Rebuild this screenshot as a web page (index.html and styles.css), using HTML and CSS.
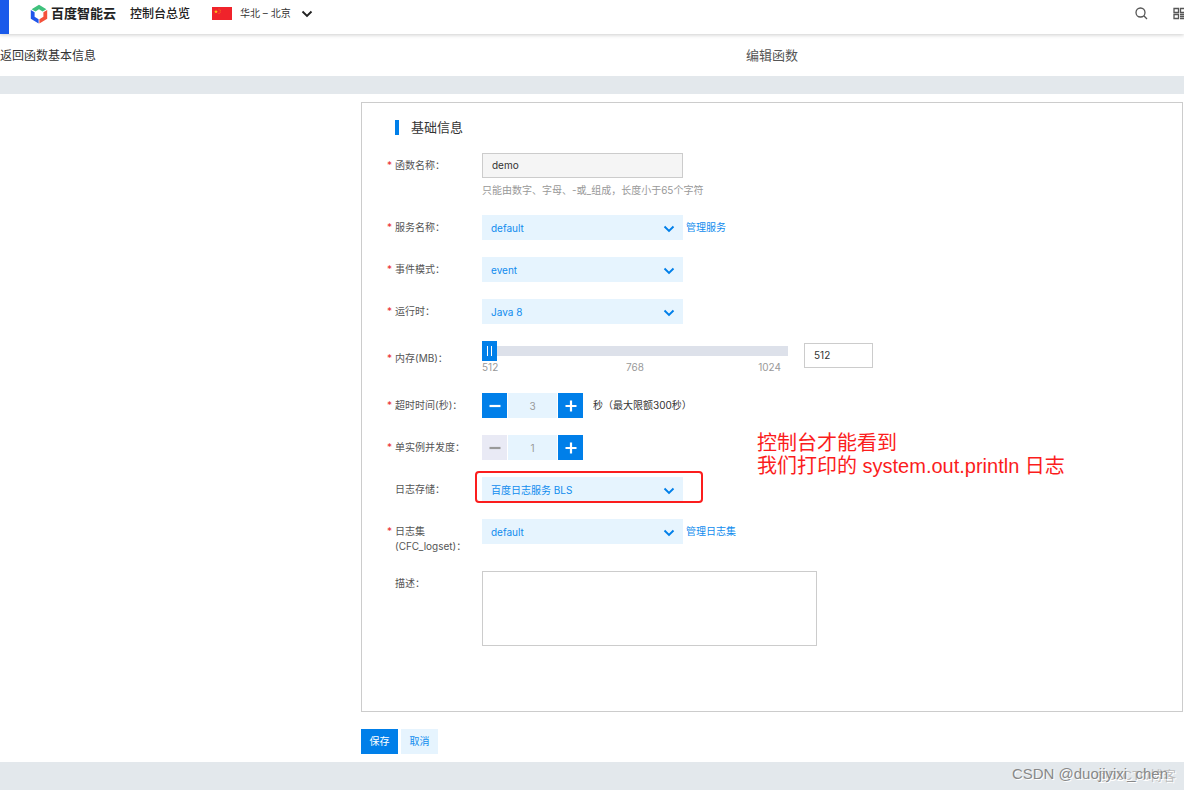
FILE: index.html
```html
<!DOCTYPE html>
<html lang="zh-CN">
<head>
<meta charset="utf-8">
<title>编辑函数</title>
<link rel="stylesheet" href="styles.css">
</head>
<body>
<svg class="defs" aria-hidden="true">
  <symbol id="chevron" viewBox="0 0 12 8"><path d="M1.5 1.5 6 6l4.5-4.5" fill="none" stroke="currentColor" stroke-width="1.9"/></symbol>
  <symbol id="plus" viewBox="0 0 12 12"><path d="M6 .5v11M.5 6h11" stroke="currentColor" stroke-width="2.2"/></symbol>
  <symbol id="minus" viewBox="0 0 12 12"><path d="M.5 6h11" stroke="currentColor" stroke-width="2.2"/></symbol>
</svg>

<header class="topbar">
  <button class="menu" type="button" aria-label="菜单"></button>
  <a class="brand" href="#">
    <svg class="brand-mark" viewBox="0 0 18 20" aria-hidden="true">
      <path d="M1.600 5.200 9 .8l7.400 4.400-3.800 2.400L9 5.300 5.400 7.600z" fill="#3fc17c"/>
      <path d="M.8 6 4.600 8.300v4.500L8.600 15.200v4.200L.8 14.800z" fill="#1f55ea"/>
      <path d="M17.200 6 13.400 8.300v4.500L9.400 15.200v4.200l7.800-4.600z" fill="#f4523b"/>
    </svg>
    <span class="brand-name">百度智能云</span>
  </a>
  <a class="overview" href="#">控制台总览</a>
  <button class="region" type="button">
    <svg class="flag" viewBox="0 0 20 13" aria-hidden="true">
      <path d="M0 0h20v13H0z" fill="#f0232b"/>
      <path d="m4 2.500.5 1.400H6L4.800 4.800l.5 1.500L4 5.400l-1.300.9.5-1.500L2 3.900h1.500z" fill="#ffc61a"/>
      <g fill="#f58a1f"><circle cx="7" cy="2" r=".5"/><circle cx="8.200" cy="3.200" r=".5"/><circle cx="8.200" cy="5" r=".5"/><circle cx="7" cy="6.200" r=".5"/></g>
    </svg>
    <span>华北 – 北京</span>
    <svg class="chevron" aria-hidden="true"><use href="#chevron"/></svg>
  </button>
  <div class="tools">
    <button class="tool" type="button" aria-label="搜索">
      <svg viewBox="0 0 13 13" fill="none" stroke="#555" stroke-width="1.300"><circle cx="5.500" cy="5.500" r="4.500"/><path d="m8.800 8.800 3.200 3.200"/></svg>
    </button>
    <button class="tool apps" type="button" aria-label="应用">
      <svg viewBox="0 0 13 13" fill="none" stroke="#555" stroke-width="1.300"><path d="M1 1.500h4.500v4H1zM7.500 1.500H12v4H7.500zM1 7.500h4.500v4H1zM7 7.500h6M7 9.500h6M7 11.500h6"/></svg>
    </button>
  </div>
</header>

<div class="titlebar">
  <a class="back" href="#">返回函数基本信息</a>
  <h1 class="page-title">编辑函数</h1>
</div>

<main class="page">
  <form class="content">
    <section class="panel">
      <h2 class="section-title">基础信息</h2>

      <div class="row">
        <label class="label required" for="name">函数名称：</label>
        <div class="stack">
          <input class="text-box name-box" id="name" type="text" value="demo" readonly>
          <p class="hint">只能由数字、字母、-或_组成，长度小于65个字符</p>
        </div>
      </div>

      <div class="row">
        <label class="label required" for="service">服务名称：</label>
        <div class="field">
          <span class="picker"><select id="service"><option>default</option></select><svg class="chevron"><use href="#chevron"/></svg></span>
          <a class="link" href="#">管理服务</a>
        </div>
      </div>

      <div class="row">
        <label class="label required" for="event">事件模式：</label>
        <div class="field">
          <span class="picker"><select id="event"><option>event</option></select><svg class="chevron"><use href="#chevron"/></svg></span>
        </div>
      </div>

      <div class="row">
        <label class="label required" for="runtime">运行时：</label>
        <div class="field">
          <span class="picker"><select id="runtime"><option>Java 8</option></select><svg class="chevron"><use href="#chevron"/></svg></span>
        </div>
      </div>

      <div class="row row-middle">
        <label class="label required" for="memory">内存(MB)：</label>
        <div class="memory">
          <div class="slider">
            <input id="memory" type="range" min="512" max="1024" value="512">
            <div class="ticks"><span>512</span><span>768</span><span>1024</span></div>
          </div>
          <input class="text-box memory-box" type="text" value="512" aria-label="内存数值">
        </div>
      </div>

      <div class="row">
        <label class="label required" for="timeout">超时时间(秒)：</label>
        <div class="field">
          <div class="stepper">
            <button type="button" aria-label="减少"><svg><use href="#minus"/></svg></button>
            <input id="timeout" type="text" value="3">
            <button type="button" aria-label="增加"><svg><use href="#plus"/></svg></button>
          </div>
          <span class="unit">秒（最大限额300秒）</span>
        </div>
      </div>

      <div class="row">
        <label class="label required" for="concurrency">单实例并发度：</label>
        <div class="field">
          <div class="stepper">
            <button type="button" aria-label="减少" disabled><svg><use href="#minus"/></svg></button>
            <input id="concurrency" type="text" value="1">
            <button type="button" aria-label="增加"><svg><use href="#plus"/></svg></button>
          </div>
        </div>
      </div>

      <div class="row">
        <label class="label" for="storage">日志存储：</label>
        <div class="field marked">
          <span class="picker"><select id="storage"><option>百度日志服务 BLS</option></select><svg class="chevron"><use href="#chevron"/></svg></span>
          <p class="note">控制台才能看到<br>我们打印的 system.out.println 日志</p>
        </div>
      </div>

      <div class="row">
        <label class="label required" for="logset">日志集<br>(CFC_logset)：</label>
        <div class="field">
          <span class="picker"><select id="logset"><option>default</option></select><svg class="chevron"><use href="#chevron"/></svg></span>
          <a class="link" href="#">管理日志集</a>
        </div>
      </div>

      <div class="row">
        <label class="label" for="desc">描述：</label>
        <textarea class="text-box desc-box" id="desc"></textarea>
      </div>
    </section>

    <div class="actions">
      <button class="btn primary" type="button">保存</button>
      <button class="btn" type="button">取消</button>
    </div>
  </form>
</main>
<div class="watermark second">@51CTO博客</div>
<div class="watermark">CSDN @duojiyixi_chen</div>
</body>
</html>
```
FILE: styles.css
```css
*, *::before, *::after { box-sizing: border-box; }

body {
  margin: 0;
  min-height: 100vh;
  display: flex;
  flex-direction: column;
  position: relative;
  overflow-x: hidden;
  background: #e3e8ec;
  color: #333;
  font: 10px/15px Inter, "Noto Sans CJK SC", sans-serif;
}

button, input, select, textarea { font: inherit; color: inherit; border: 0; border-radius: 0; margin: 0; padding: 0; }
button { background: none; }
a { color: inherit; text-decoration: none; }
h1, h2, p { margin: 0; font-weight: 400; }
svg { display: block; }
.defs { display: none; }

.topbar {
  position: relative;
  z-index: 1;
  display: flex;
  align-items: center;
  height: 34px;
  padding-bottom: 7px;
  background: #fff;
  box-shadow: 0 1px 4px rgba(0, 0, 0, .2);
}
.menu { width: 9px; height: 34px; margin-bottom: -7px; background: #1a5aea; }
.brand { display: flex; align-items: center; gap: 3px; margin-left: 21px; }
.brand-mark { width: 18px; height: 20px; }
.brand-name { color: #222; font-size: 13px; font-weight: 700; }
.overview { margin-left: 14px; color: #222; font-size: 12px; font-weight: 500; }
.region { display: flex; align-items: center; gap: 8px; margin-left: 22px; }
.flag { width: 20px; height: 13px; }
.region .chevron { margin-left: 2px; color: #222; }
.chevron { width: 12px; height: 8px; }
.tools { display: flex; gap: 25px; margin-left: auto; margin-right: -2px; }
.tool svg { width: 13px; height: 13px; }

.titlebar {
  display: grid;
  grid-template-columns: 361px 1fr;
  align-items: center;
  height: 42px;
  padding-right: 1px;
  background: #fff;
}
.back { font-size: 12px; }
.page-title { font-size: 13px; color: #555; text-align: center; }

.page { margin-top: 18px; padding: 8px 1px 8px 361px; background: #fff; }
.panel { padding: 15px 33px 65px; border: 1px solid #ccc; display: flex; flex-direction: column; gap: 17px; }
.section-title {
  display: flex;
  align-items: center;
  gap: 12px;
  height: 18px;
  font-size: 13px;
}
.section-title::before { content: ""; width: 4px; height: 15px; background: #007fe9; }

.row { display: grid; grid-template-columns: 87px 1fr; align-items: start; }
.row-middle { align-items: center; }
.label { position: relative; padding-top: 5px; color: #555; white-space: nowrap; }
.row-middle .label { padding-bottom: 5px; }
.required::before { content: "*"; position: absolute; left: -8px; color: #ea2e2e; }
.field { display: flex; align-items: center; gap: 3px; height: 25px; }
.link { color: #108cee; }

.text-box { height: 25px; padding: 0 9px 2px; border: 1px solid #ccc; background: #fff; }
.name-box { width: 201px; background: #f5f5f5; }
.stack { display: flex; flex-direction: column; gap: 5px; align-items: flex-start; }
.hint { color: #999; }

.picker { position: relative; width: 201px; }
.picker select {
  display: block;
  width: 100%;
  height: 25px;
  padding: 2px 9px 0;
  appearance: none;
  background: #e6f4fe;
  color: #108cee;
}
.picker .chevron { position: absolute; right: 8px; top: 10px; color: #007fe9; pointer-events: none; }

.memory { display: flex; align-items: flex-start; gap: 16px; }
.slider { width: 306px; }
.slider input {
  display: block;
  width: 100%;
  height: 20px;
  appearance: none;
  background: linear-gradient(#dde1ea, #dde1ea) center / 100% 10px no-repeat;
}
.slider input::-webkit-slider-thumb {
  appearance: none;
  width: 15px;
  height: 20px;
  background:
    linear-gradient(#fff, #fff) 5px 5px / 1px 10px no-repeat,
    linear-gradient(#fff, #fff) 9px 5px / 1px 10px no-repeat,
    #007fe9;
}
.ticks { display: grid; grid-template-columns: 1fr auto 1fr; padding-bottom: 2px; color: #999; line-height: 13px; }
.ticks span:last-child { padding-right: 7px; text-align: right; }
.memory-box { width: 69px; margin-top: 2px; }

.stepper { display: flex; gap: 1px; }
.stepper button { display: grid; place-items: center; width: 25px; height: 25px; background: #007fe9; color: #fff; }
.stepper button:disabled { background: #e9eaf5; color: #999; }
.stepper svg { width: 12px; height: 12px; }
.stepper input { width: 49px; height: 25px; background: #e6f4fe; color: #999; text-align: center; }
.unit { margin-left: 7px; }

.marked { position: relative; }
.marked::after {
  content: "";
  position: absolute;
  left: -7px;
  top: -6px;
  width: 228px;
  height: 32px;
  border: 2px solid #fb1d1d;
  border-radius: 4px;
  pointer-events: none;
}
.note {
  position: absolute;
  left: 275px;
  top: -45px;
  color: #fb1d1d;
  font: 20px/23px "Liberation Sans", "Noto Sans CJK SC", sans-serif;
  white-space: nowrap;
}

.desc-box { display: block; width: 335px; height: 75px; resize: none; }

.actions { display: flex; gap: 3px; margin-top: 17px; }
.btn { width: 37px; height: 25px; background: #e6f4fe; color: #108cee; }
.btn.primary { background: #007fe9; color: #fff; }

.watermark {
  position: absolute;
  right: 16px;
  bottom: 6px;
  color: #888;
  font: 15px/20px "Liberation Sans", "Noto Sans CJK SC", sans-serif;
  text-shadow: 1px 1px #fff;
}
.watermark.second { right: 8px; bottom: 4px; color: #bbb; font-size: 13px; }
```
